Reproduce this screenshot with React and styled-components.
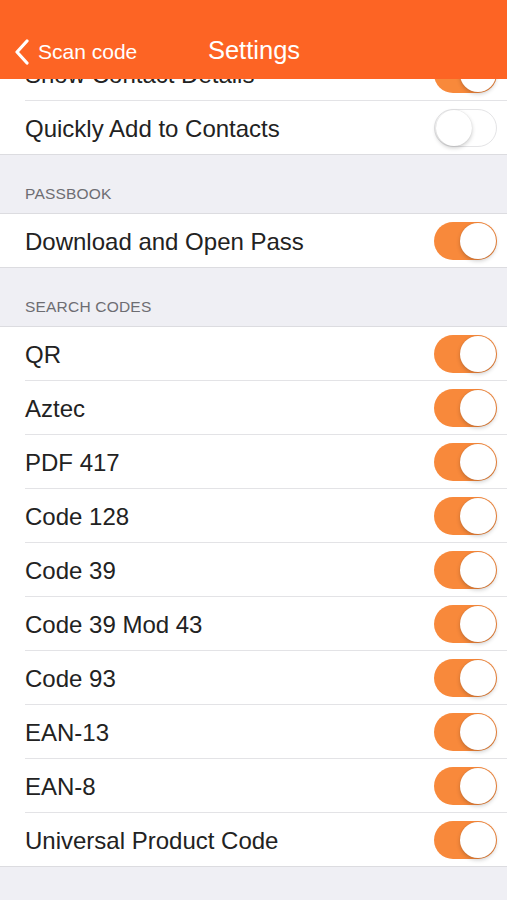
import React from 'react';
import styled, { createGlobalStyle } from 'styled-components';

const GlobalStyle = createGlobalStyle`
  html, body {
    margin: 0;
    padding: 0;
    background: #efeff4;
    font-family: "Liberation Sans", Arial, sans-serif;
  }
`

const NavBar = styled.header`
  position: fixed;
  top: 0;
  left: 0;
  right: 0;
  height: 79px;
  background: #fd6424;
  color: #fff;
  z-index: 10;
  display: flex;
  align-items: flex-end;
`

const NavInner = styled.div`
  position: relative;
  width: 100%;
  height: 58px;
  display: flex;
  align-items: center;
  justify-content: center;
`

const BackButton = styled.div`
  position: absolute;
  left: 14px;
  top: 0;
  bottom: 0;
  display: flex;
  align-items: center;
  gap: 8px;
  font-size: 21px;
  padding-top: 4px;
`

const Title = styled.div`
  font-size: 25.5px;
  padding-left: 1px;
`

const Page = styled.main`
  padding-top: 47px;
  padding-bottom: 40px;
`

const Group = styled.section`
  background: #fff;
  border-top: ${p => (p.$flush ? 'none' : '1px solid #dcdce0')};
  border-bottom: 1px solid #dcdce0;
`

const GroupHeader = styled.div`
  height: 58px;
  box-sizing: border-box;
  padding: 0 25px 10px;
  display: flex;
  align-items: flex-end;
  font-size: 15.5px;
  color: #6d6d72;
  text-transform: uppercase;
  letter-spacing: 0.2px;
`

const Row = styled.div`
  height: 53px;
  display: flex;
  align-items: center;
  justify-content: space-between;
  padding: 0 10px 0 25px;
  position: relative;
  & + & {
    border-top: 1px solid #e3e3e6;
  }
  & + &::before {
    content: '';
    position: absolute;
    left: 0;
    width: 25px;
    top: -1px;
    height: 1px;
    background: #fff;
  }
`

const Label = styled.span`
  font-size: 24px;
  color: #222;
  padding-top: 2px;
`

const Track = styled.div`
  width: 63px;
  height: 38px;
  box-sizing: border-box;
  border-radius: 19px;
  background: ${p => (p.$on ? '#f8893b' : '#fff')};
  border: ${p => (p.$on ? 'none' : '1.5px solid #e4e4e6')};
  display: flex;
  align-items: center;
  justify-content: ${p => (p.$on ? 'flex-end' : 'flex-start')};
  padding: 0 1px;
`

const Knob = styled.div`
  width: 36px;
  height: 36px;
  border-radius: 50%;
  background: #fff;
  box-shadow: 0 2px 4px rgba(0, 0, 0, 0.2), 0 0 1px rgba(0, 0, 0, 0.15);
`

const Toggle = ({ on }) => (
  <Track $on={on}>
    <Knob />
  </Track>
)

const Chevron = () => (
  <svg width="16" height="26" viewBox="0 0 16 26">
    <path d="M13 2 L3 13 L13 24" fill="none" stroke="#fff" strokeWidth="3.2" strokeLinecap="round" strokeLinejoin="round" />
  </svg>
)

const codes = [
  'QR', 'Aztec', 'PDF 417', 'Code 128', 'Code 39', 'Code 39 Mod 43',
  'Code 93', 'EAN-13', 'EAN-8', 'Universal Product Code'
]

const App = () => (
  <>
    <GlobalStyle />
    <NavBar>
      <NavInner>
        <BackButton>
          <Chevron />
          Scan code
        </BackButton>
        <Title>Settings</Title>
      </NavInner>
    </NavBar>
    <Page>
      <Group $flush>
        <Row><Label>Show Contact Details</Label><Toggle on /></Row>
        <Row><Label>Quickly Add to Contacts</Label><Toggle on={false} /></Row>
      </Group>
      <GroupHeader>Passbook</GroupHeader>
      <Group>
        <Row><Label>Download and Open Pass</Label><Toggle on /></Row>
      </Group>
      <GroupHeader>Search Codes</GroupHeader>
      <Group>
        {codes.map(c => (
          <Row key={c}><Label>{c}</Label><Toggle on /></Row>
        ))}
      </Group>
    </Page>
  </>
)

export default App;
